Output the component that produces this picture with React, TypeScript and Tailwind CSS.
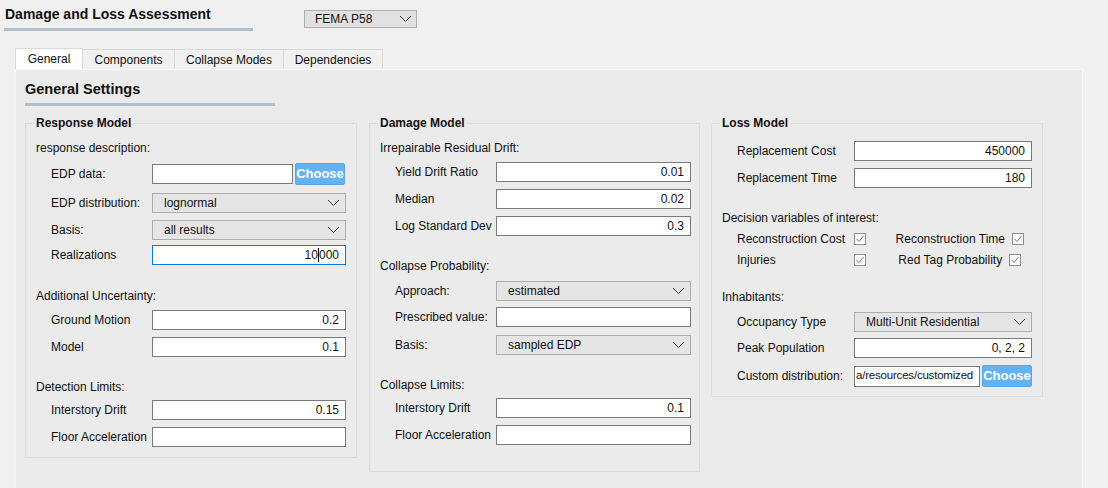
import React from 'react';

function Chevron() {
  return (
    <svg width="13" height="8" viewBox="0 0 13 8" fill="none">
      <path d="M1 1l5.5 5.5L12 1" stroke="#333" strokeWidth="1" />
    </svg>
  );
}

function Check() {
  return (
    <span className="flex items-center justify-center w-[12px] h-[12px] border border-[#8f8f8f] bg-[#f9f9f9]">
      <svg width="10" height="10" viewBox="0 0 10 10" fill="none">
        <path d="M1.5 5l2.5 2.5L8.5 2" stroke="#7d7d7d" strokeWidth="1" />
      </svg>
    </span>
  );
}

function Field({ value = '', w, focus }: { value?: string; w: string; focus?: boolean }) {
  return (
    <div
      className={`${w} h-[20px] bg-white border flex items-center justify-end pr-[6px] ${
        focus ? 'border-[#0078d7]' : 'border-[#7a7a7a]'
      }`}
    >
      {focus ? (
        <span>
          10<span className="border-l border-black" />000
        </span>
      ) : (
        value
      )}
    </div>
  );
}

function Combo({ value, w }: { value: string; w: string }) {
  return (
    <div className={`${w} h-[20px] bg-[#e5e5e5] border border-[#adadad] flex items-center justify-between pl-[11px] pr-[5px]`}>
      <span>{value}</span>
      <Chevron />
    </div>
  );
}

function ChooseBtn() {
  return (
    <div className="w-[50px] h-[22px] rounded-[2px] bg-[#63b2f2] border border-[#58a6e6] text-white font-bold text-[13px] flex items-center justify-center">
      Choose
    </div>
  );
}

function Row({ label, lw, mt, children }: { label: string; lw: string; mt: string; children: React.ReactNode }) {
  return (
    <div className={`flex items-center pl-[25px] ${mt}`}>
      <span className={`${lw} shrink-0`}>{label}</span>
      {children}
    </div>
  );
}

function Section({ text, mt }: { text: string; mt: string }) {
  return <div className={`h-[14px] leading-[14px] pl-[10px] ${mt}`}>{text}</div>;
}

function Group({ title, w, pb, children }: { title: string; w: string; pb: string; children: React.ReactNode }) {
  return (
    <div className={`relative ${w} ${pb} border border-[#dcdcdc]`}>
      <span className="absolute -top-[8px] left-[8px] px-[2px] bg-[#ebebeb] font-bold leading-[14px]">{title}</span>
      {children}
    </div>
  );
}

export default function App() {
  const tabs = [
    { name: 'Components', w: 'w-[93px]' },
    { name: 'Collapse Modes', w: 'w-[110px]' },
    { name: 'Dependencies', w: 'w-[100px]' },
  ];

  return (
    <div className="w-[1108px] h-[488px] overflow-hidden bg-[#f0f0f0] text-[12px] text-[#111] font-['Liberation_Sans',Arial,sans-serif]">
      {/* Header */}
      <div className="flex items-start">
        <div className="ml-[4px] w-[249px]">
          <div className="mt-[6px] pl-[1px] h-[17px] leading-[17px] text-[14px] font-bold">Damage and Loss Assessment</div>
          <div className="mt-[5px] h-[3px] bg-[#b3bfc6]" />
        </div>
        <div className="ml-[51px] mt-[10px] w-[113px] h-[18px] bg-[#e1e1e1] border border-[#adadad] flex items-center justify-between pl-[10px] pr-[4px]">
          <span>FEMA P58</span>
          <Chevron />
        </div>
      </div>

      {/* Tabs */}
      <div className="flex items-end ml-[15px] mt-[17px] h-[21px]">
        <div className="w-[68px] h-[21px] bg-white border border-b-0 border-[#d9d9d9] flex items-center justify-center">General</div>
        {tabs.map((t) => (
          <div key={t.name} className={`${t.w} h-[20px] -ml-px border border-b-0 border-[#d9d9d9] flex items-center justify-center`}>
            {t.name}
          </div>
        ))}
      </div>

      {/* Panel */}
      <div className="ml-[15px] w-[1068px] h-[420px] bg-[#ebebeb] border border-[#f7f7f7] pl-[9px]">
        <div className="mt-[10px] h-[18px] leading-[18px] text-[14.5px] font-bold">General Settings</div>
        <div className="mt-[5px] w-[250px] h-[3px] bg-[#b3bfc6]" />

        <div className="flex items-start mt-[17px]">
          {/* Response Model */}
          <Group title="Response Model" w="w-[332px]" pb="pb-[10px]">
            <Section text="response description:" mt="mt-[17px]" />
            <Row label="EDP data:" lw="w-[101px]" mt="mt-[8px]">
              <Field w="w-[141px]" />
              <div className="ml-[2px]">
                <ChooseBtn />
              </div>
            </Row>
            <Row label="EDP distribution:" lw="w-[101px]" mt="mt-[8px]">
              <Combo value="lognormal" w="w-[194px]" />
            </Row>
            <Row label="Basis:" lw="w-[101px]" mt="mt-[7px]">
              <Combo value="all results" w="w-[194px]" />
            </Row>
            <Row label="Realizations" lw="w-[101px]" mt="mt-[5px]">
              <Field w="w-[194px]" focus />
            </Row>
            <Section text="Additional Uncertainty:" mt="mt-[24px]" />
            <Row label="Ground Motion" lw="w-[101px]" mt="mt-[7px]">
              <Field value="0.2" w="w-[194px]" />
            </Row>
            <Row label="Model" lw="w-[101px]" mt="mt-[7px]">
              <Field value="0.1" w="w-[194px]" />
            </Row>
            <Section text="Detection Limits:" mt="mt-[23px]" />
            <Row label="Interstory Drift" lw="w-[101px]" mt="mt-[6px]">
              <Field value="0.15" w="w-[194px]" />
            </Row>
            <Row label="Floor Acceleration" lw="w-[101px]" mt="mt-[7px]">
              <Field w="w-[194px]" />
            </Row>
          </Group>

          {/* Damage Model */}
          <div className="ml-[12px]">
            <Group title="Damage Model" w="w-[331px]" pb="pb-[26px]">
              <Section text="Irrepairable Residual Drift:" mt="mt-[17px]" />
              <Row label="Yield Drift Ratio" lw="w-[101px]" mt="mt-[7px]">
                <Field value="0.01" w="w-[195px]" />
              </Row>
              <Row label="Median" lw="w-[101px]" mt="mt-[7px]">
                <Field value="0.02" w="w-[195px]" />
              </Row>
              <Row label="Log Standard Dev" lw="w-[101px]" mt="mt-[7px]">
                <Field value="0.3" w="w-[195px]" />
              </Row>
              <Section text="Collapse Probability:" mt="mt-[23px]" />
              <Row label="Approach:" lw="w-[101px]" mt="mt-[8px]">
                <Combo value="estimated" w="w-[195px]" />
              </Row>
              <Row label="Prescribed value:" lw="w-[101px]" mt="mt-[6px]">
                <Field w="w-[195px]" />
              </Row>
              <Row label="Basis:" lw="w-[101px]" mt="mt-[8px]">
                <Combo value="sampled EDP" w="w-[195px]" />
              </Row>
              <Section text="Collapse Limits:" mt="mt-[23px]" />
              <Row label="Interstory Drift" lw="w-[101px]" mt="mt-[6px]">
                <Field value="0.1" w="w-[195px]" />
              </Row>
              <Row label="Floor Acceleration" lw="w-[101px]" mt="mt-[7px]">
                <Field w="w-[195px]" />
              </Row>
            </Group>
          </div>

          {/* Loss Model */}
          <div className="ml-[11px]">
            <Group title="Loss Model" w="w-[332px]" pb="pb-[9px]">
              <Row label="Replacement Cost" lw="w-[117px]" mt="mt-[17px]">
                <Field value="450000" w="w-[178px]" />
              </Row>
              <Row label="Replacement Time" lw="w-[117px]" mt="mt-[7px]">
                <Field value="180" w="w-[178px]" />
              </Row>
              <Section text="Decision variables of interest:" mt="mt-[23px]" />
              <div className="flex items-center pl-[25px] mt-[6px] h-[16px]">
                <span className="w-[117px]">Reconstruction Cost</span>
                <Check />
                <div className="ml-[12px] w-[165px] flex items-center justify-center gap-[7px]">
                  <span>Reconstruction Time</span>
                  <Check />
                </div>
              </div>
              <div className="flex items-center pl-[25px] mt-[5px] h-[16px]">
                <span className="w-[117px]">Injuries</span>
                <Check />
                <div className="ml-[12px] w-[165px] flex items-center justify-center gap-[7px]">
                  <span>Red Tag Probability</span>
                  <Check />
                </div>
              </div>
              <Section text="Inhabitants:" mt="mt-[22px]" />
              <Row label="Occupancy Type" lw="w-[117px]" mt="mt-[8px]">
                <Combo value="Multi-Unit Residential" w="w-[178px]" />
              </Row>
              <Row label="Peak Population" lw="w-[117px]" mt="mt-[6px]">
                <Field value="0, 2, 2" w="w-[178px]" />
              </Row>
              <Row label="Custom distribution:" lw="w-[117px]" mt="mt-[7px]">
                <div className="w-[126px] h-[21px] bg-white border border-[#7a7a7a] flex items-center pl-[1px] whitespace-nowrap text-[11.5px] tracking-[-0.2px]">
                  a/resources/customized
                </div>
                <div className="ml-[2px]">
                  <ChooseBtn />
                </div>
              </Row>
            </Group>
          </div>
        </div>
      </div>
    </div>
  );
}
